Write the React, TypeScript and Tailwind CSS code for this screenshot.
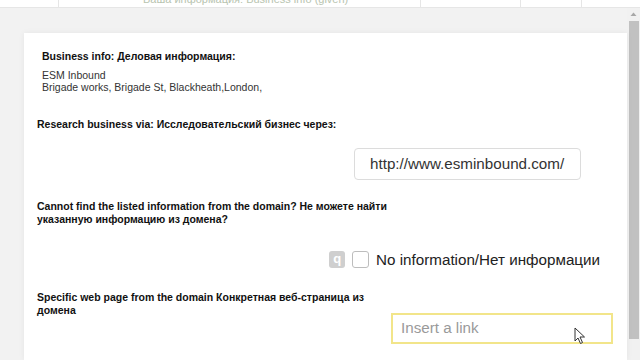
import React from "react";

export default function App() {
  return (
    <div className="w-[640px] h-[360px] bg-[#f2f2f2] flex flex-col overflow-hidden relative" style={{ fontFamily: '"Liberation Sans", Arial, sans-serif' }}>
      {/* top table strip */}
      <div className="h-[8px] bg-white border-b border-[#e6e6e6] flex shrink-0">
        <div className="w-[59px] border-r border-[#e6e6e6]" />
        <div className="w-[362px] border-r border-[#e6e6e6] relative overflow-hidden">
          <div className="absolute left-[84px] top-[-9px] text-[11px] text-[#b8c4b0] whitespace-nowrap">Ваша информация: Business info (given)</div>
        </div>
        <div className="w-[100px] border-r border-[#e6e6e6]" />
        <div className="w-[61px] border-r border-[#e6e6e6]" />
        <div className="flex-1" />
      </div>

      <div className="flex-1 flex min-h-0">
        <div className="flex-1 pl-[24px] pt-[25px] min-w-0">
          <div className="bg-white h-full shadow-[0_0_6px_rgba(0,0,0,0.06)] relative">
            <div className="pt-[17px] pl-[18px]">
              <div className="text-[10.5px] leading-[13px] font-bold text-[#111]">Business info: Деловая информация:</div>
              <div className="mt-[6px] text-[10.5px] leading-[12px] text-[#333]">
                <div>ESM Inbound</div>
                <div>Brigade works, Brigade St, Blackheath,London,</div>
              </div>
            </div>

            <div className="pl-[13px] mt-[25px] text-[10.5px] leading-[13px] font-bold text-[#111]">Research business via: Исследовательский бизнес через:</div>

            <div className="flex justify-end pr-[46px] mt-[17px]">
              <div className="w-[227px] h-[32px] border border-[#dcdcdc] rounded-[4px] flex items-center pl-[15px] text-[15.2px] text-[#333]">http://www.esminbound.com/</div>
            </div>

            <div className="pl-[13px] mt-[20px] text-[10.5px] leading-[13px] font-bold text-[#111] w-[365px]">Cannot find the listed information from the domain? Не можете найти указанную информацию из домена?</div>

            <div className="flex justify-end items-center pr-[27px] mt-[25px] h-[17px]">
              <div className="w-[16px] h-[17px] rounded-[3px] bg-[#cfcfcf] text-white text-[13px] font-bold flex items-center justify-center leading-none pb-[2px]">q</div>
              <div className="ml-[7px] w-[17px] h-[17px] rounded-[3px] border border-[#bdbdbd] bg-white" />
              <div className="ml-[7px] text-[15.2px] text-[#222] leading-none">No information/Нет информации</div>
            </div>

            <div className="pl-[13px] mt-[23px] text-[10.5px] leading-[13px] font-bold text-[#111] w-[365px]">Specific web page from the domain Конкретная веб-страница из домена</div>

            <div className="flex justify-end pr-[14px] mt-[-4px]">
              <div className="w-[222px] h-[31px] border-2 border-[#f2e58a] flex items-center pl-[8px] text-[15.2px] text-[#9a9a9a]">Insert a link</div>
            </div>

            <svg className="absolute left-[550px] top-[294px]" width="12" height="18" viewBox="0 0 12 18">
              <path d="M1 1 L1 14 L4 11 L6.5 16.5 L8.5 15.5 L6 10 L10.5 10 Z" fill="white" stroke="#333" strokeWidth="1" strokeLinejoin="round" />
            </svg>
          </div>
        </div>

        {/* scrollbar */}
        <div className="w-[13px] bg-[#f1f1f1] flex flex-col items-center">
          <svg className="mt-[4px]" width="7" height="5" viewBox="0 0 7 5">
            <path d="M3.5 0.5 L6.5 4 L0.5 4 Z" fill="#a8a8a8" />
          </svg>
          <div className="mt-[4px] w-[10px] h-[318px] bg-[#c1c1c1]" />
        </div>
      </div>
    </div>
  );
}
